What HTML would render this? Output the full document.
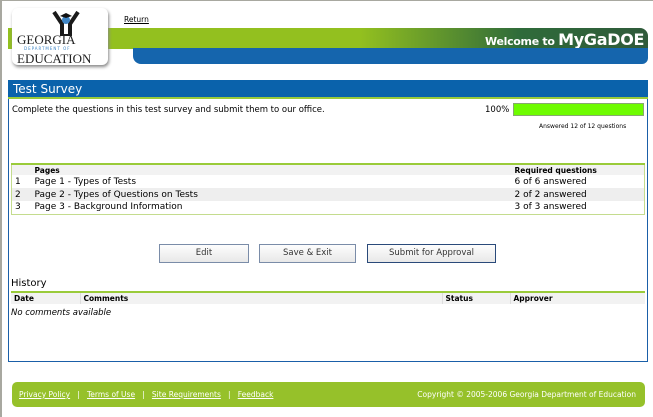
<!DOCTYPE html>
<html><head><style>
*{margin:0;padding:0;box-sizing:border-box}
body{width:653px;height:417px;position:relative;background:#fff;font-family:"DejaVu Sans","Liberation Sans",sans-serif;font-size:8.5px;color:#000;overflow:hidden}
.a{position:absolute}
.green{left:8px;top:28px;width:640px;height:21px;background:linear-gradient(90deg,#93c01f 0,#93c01f 55%,#2f6b3a 80%,#2f5a3a 100%);border-radius:0 8px 0 0}
.blue{left:133px;top:48px;width:515px;height:16px;background:#1565ad;border-radius:0 0 6px 8px}
.logo{left:12px;top:8px;width:96px;height:57px;background:#fff;border-radius:6px;box-shadow:1px 2px 3px #888}
.panel{left:8px;top:80px;width:640px;height:282px;border:1px solid #1a5fa8;background:#fff}
.hdr{left:8px;top:80px;width:640px;height:19px;background:#0a62ab;color:#fff;font-size:12px;padding:2px 5px;border-bottom:2px solid #9acb3a}
table{border-collapse:collapse;font-size:9px}
td,th{padding:0 3px;text-align:left;white-space:nowrap}
.btn{top:244px;height:19px;border:1px solid #7a8ca8;background:linear-gradient(#fdfdfd,#e8e8e8);font-size:8.5px;text-align:center;line-height:17px;color:#333}
.foot{left:12px;top:382px;width:633px;height:25px;background:#96c12a;border-radius:5px;color:#fff;font-size:7.5px;line-height:25px;padding-left:7px}
.foot u{text-decoration:underline}
</style></head><body>
<div class="a" style="left:0;top:0;width:2px;height:417px;background:#a8a8a0"></div>
<div class="a" style="left:0;top:0;width:653px;height:1px;background:#a8a8a0"></div>
<div class="a green"></div>
<div class="a" style="left:485px;top:30px;color:#fff;font-weight:bold;font-size:11px;font-family:'DejaVu Sans',sans-serif;letter-spacing:-0.3px">Welcome to <span style="font-size:16px">MyGaDOE</span></div>
<div class="a blue"></div>
<div class="a logo">
<svg class="a" style="left:40px;top:2px" width="28" height="26" viewBox="0 0 28 26"><path d="M2 2 L10 14 L10 26 L18 26 L18 14 L26 2" stroke="#1a1a1a" stroke-width="4" fill="none"/><circle cx="14" cy="10" r="4" fill="#3f86c6"/><path d="M8 6 L14 3 L20 6 L14 8Z" fill="#111"/></svg>
<div class="a" style="left:5px;top:24px;font-family:'Liberation Serif',serif;font-size:13px;color:#222">GEORGIA</div>
<div class="a" style="left:12px;top:38px;font-size:4px;color:#3f86c6;letter-spacing:1px">DEPARTMENT OF</div>
<div class="a" style="left:5px;top:43px;font-family:'Liberation Serif',serif;font-size:13px;color:#222">EDUCATION</div>
</div>
<div class="a" style="left:124px;top:15px;text-decoration:underline;font-size:7.5px">Return</div>
<div class="a panel"></div>
<div class="a hdr">Test Survey</div>
<div class="a" style="left:12px;top:105px">Complete the questions in this test survey and submit them to our office.</div>
<div class="a" style="left:485px;top:105px">100%</div>
<div class="a" style="left:513px;top:103px;width:131px;height:13px;background:#6efc00;border:1px solid #88a870"></div>
<div class="a" style="left:539px;top:123px;font-size:6px">Answered 12 of 12 questions</div>
<table class="a" style="left:11px;top:163px;width:634px;border:1px solid #c4dc8e;border-top:2px solid #9acb3a">
<tr style="background:#f2f2f2;height:11px"><th style="width:20px;font-size:7.5px"></th><th style="font-size:7.5px">Pages</th><th style="width:133px;font-size:7.5px">Required questions</th></tr>
<tr style="height:13px"><td>1</td><td>Page 1 - Types of Tests</td><td>6 of 6 answered</td></tr>
<tr style="height:13px;background:#eee"><td>2</td><td>Page 2 - Types of Questions on Tests</td><td>2 of 2 answered</td></tr>
<tr style="height:13px"><td>3</td><td>Page 3 - Background Information</td><td>3 of 3 answered</td></tr>
</table>
<div class="a btn" style="left:159px;width:90px">Edit</div>
<div class="a btn" style="left:259px;width:97px">Save &amp; Exit</div>
<div class="a btn" style="left:367px;width:129px;border-color:#2a4a7a">Submit for Approval</div>
<div class="a" style="left:11px;top:278px;font-size:10px">History</div>
<table class="a" style="left:11px;top:291px;width:634px;border-top:2px solid #9acb3a">
<tr style="background:#f2f2f2;height:12px;font-size:7.5px"><th style="width:69px;border-right:1px solid #ddd">Date</th><th style="border-right:1px solid #ddd">Comments</th><th style="width:68px;border-right:1px solid #ddd">Status</th><th style="width:135px">Approver</th></tr>
</table>
<div class="a" style="left:11px;top:308px;font-style:italic">No comments available</div>
<div class="a foot"><u>Privacy Policy</u> &nbsp;&nbsp;|&nbsp;&nbsp; <u>Terms of Use</u> &nbsp;&nbsp;|&nbsp;&nbsp; <u>Site Requirements</u> &nbsp;&nbsp;|&nbsp;&nbsp; <u>Feedback</u><span style="position:absolute;right:9px">Copyright © 2005-2006 Georgia Department of Education</span></div>
</body></html>
